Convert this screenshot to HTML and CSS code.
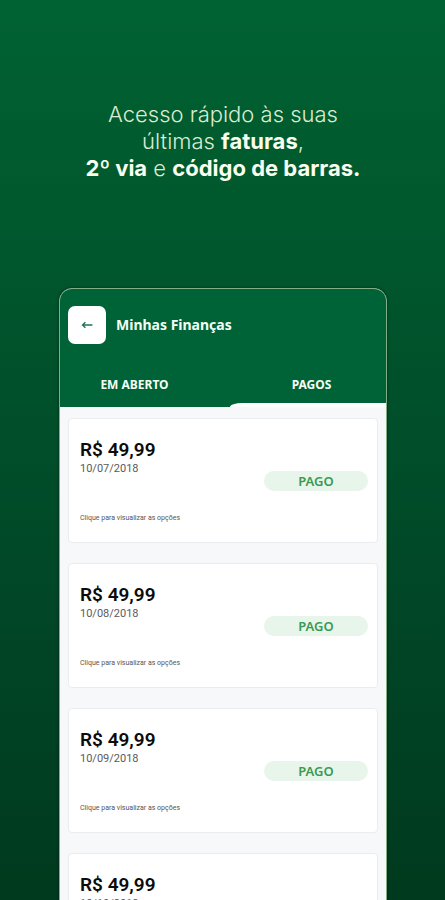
FILE: index.html
```
<!DOCTYPE html>
<html lang="pt-BR">
<head>
    <meta charset="UTF-8">
    <meta name="viewport" content="width=device-width, initial-scale=1">
    <title>Minhas Finanças</title>
    <link rel="stylesheet" href="styles.css">
</head>
<body>
    <main class="promo">
        <h1 class="headline">
            Acesso rápido às suas<br>
            últimas <b>faturas</b>,<br>
            <b>2º via</b> e <b>código de barras.</b>
        </h1>
        <section class="phone">
            <header class="top">
                <div class="title-bar">
                    <button class="back" type="button" aria-label="Voltar">
                        <svg width="12" height="10" viewBox="0 0 12 10" fill="none" stroke="#1f7350" stroke-width="1.4">
                            <path d="M11.4 5H1.6"/>
                            <path d="M4.4 2.2L1.6 5l2.8 2.8"/>
                        </svg>
                    </button>
                    <h2>Minhas Finanças</h2>
                </div>
                <nav class="tabs">
                    <button type="button">EM ABERTO</button>
                    <button class="on" type="button">PAGOS</button>
                </nav>
            </header>
            <ul class="list">
                <li class="card">
                    <div class="info">
                        <p class="price">R$ 49,99</p>
                        <p class="date">10/07/2018</p>
                        <p class="hint">Clique para visualizar as opções</p>
                    </div>
                    <span class="status">PAGO</span>
                </li>
                <li class="card">
                    <div class="info">
                        <p class="price">R$ 49,99</p>
                        <p class="date">10/08/2018</p>
                        <p class="hint">Clique para visualizar as opções</p>
                    </div>
                    <span class="status">PAGO</span>
                </li>
                <li class="card">
                    <div class="info">
                        <p class="price">R$ 49,99</p>
                        <p class="date">10/09/2018</p>
                        <p class="hint">Clique para visualizar as opções</p>
                    </div>
                    <span class="status">PAGO</span>
                </li>
                <li class="card">
                    <div class="info">
                        <p class="price">R$ 49,99</p>
                        <p class="date">10/10/2018</p>
                        <p class="hint">Clique para visualizar as opções</p>
                    </div>
                    <span class="status">PAGO</span>
                </li>
            </ul>
        </section>
    </main>
</body>
</html>
```
FILE: styles.css
```
body,h1,h2,p,ul{ margin: 0;}
ul{ padding: 0;list-style: none;}
*{ box-sizing: border-box;}
button{
    border: 0;
    padding: 0;
    background: none;
    font: inherit;
    color: inherit;
    cursor: pointer;
}
.promo{
    height: 100vh;
    padding: 101px 58px 0 59px;
    overflow: hidden;
    background: linear-gradient(#006233 0%, #005a2e 20%, #00502b 45%, #004526 70%, #003a1e 100%);
}
.headline{
    margin: 0 -30px 106px;
    font: 300 22px/27px Inter, sans-serif;
    text-align: center;
    color: #dcebd2;
}
.headline b{
    font-weight: 700;
    color: #fafff0;
}
.phone{
    border: 1px solid #84ae86;
    border-radius: 13px 13px 0 0;
    overflow: hidden;
    background-color: #f6f8fa;
    box-shadow: 0 0 3px rgba(0,0,0,.5);
}
.top{
    padding-top: 17px;
    background-color: #006338;
    font-family: "Noto Sans", sans-serif;
    font-weight: 700;
    color: #f4fff4;
}
.title-bar{
    display: flex;
    align-items: center;
    gap: 10px;
    padding: 0 8px;
}
.title-bar h2{
    font-size: 14px;
    line-height: 18px;
}
.back{
    display: flex;
    align-items: center;
    justify-content: center;
    width: 38px;
    height: 38px;
    border-radius: 7px;
    background-color: #fff;
}
.tabs{
    display: grid;
    grid-template-columns: 1fr 1fr;
    padding-top: 32px;
}
.tabs button{
    height: 31px;
    padding: 0 14px 13px 0;
    font-size: 12px;
    line-height: 18px;
}
/* white lip under the selected tab */
.tabs .on{
    position: relative;
    padding: 0 0 13px 14px;
}
.tabs .on::after{
    content: "";
    position: absolute;
    left: 7px;
    right: 0;
    bottom: 0;
    height: 4px;
    border-top-left-radius: 12px 4px;
    background-color: #fdfdfe;
}
.list{
    display: grid;
    gap: 20px;
    padding: 11px 8px;
}
.card{
    display: flex;
    align-items: center;
    justify-content: space-between;
    height: 125px;
    padding: 0 9px 0 11px;
    border: 1px solid #eaedf0;
    border-radius: 4px;
    background-color: #fff;
    font-family: Roboto, sans-serif;
}
.price{
    font-size: 19px;
    font-weight: 600;
    line-height: 22px;
    color: #0c0c0c;
}
.date{
    font-size: 11px;
    line-height: 16px;
    color: #5a5a5a;
}
.hint{
    margin-top: 36px;
    font-size: 7px;
    line-height: 10px;
    color: #555;
}
.status{
    width: 104px;
    border-radius: 10px;
    background-color: #e8f5eb;
    font: 600 13px/20px "Noto Sans", sans-serif;
    text-align: center;
    color: #3a9a53;
}
```
